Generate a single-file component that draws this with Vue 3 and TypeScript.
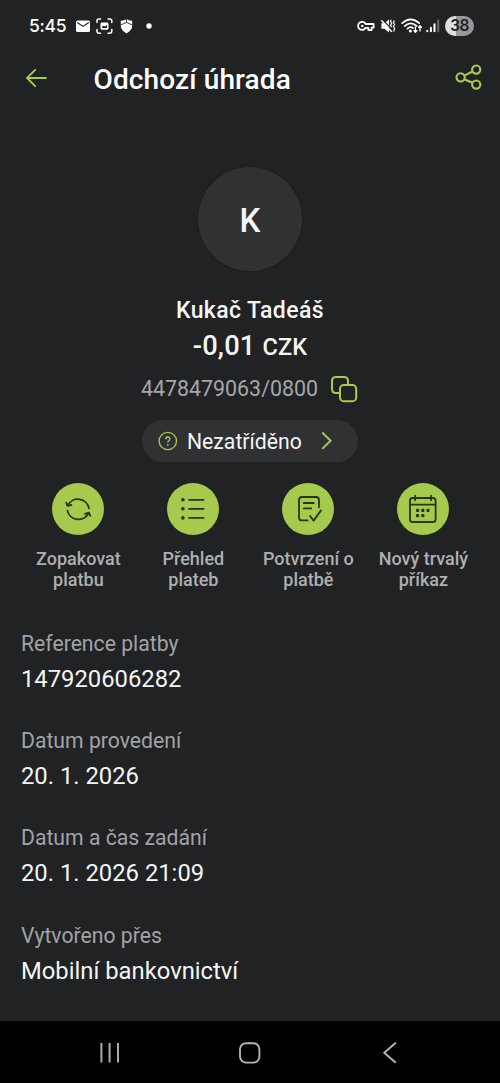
<script setup lang="ts">
type IconName = 'repeat' | 'list' | 'confirm' | 'calendar'

interface Action {
  icon: IconName
  lines: [string, string]
}

interface Field {
  label: string
  value: string
}

const actions: Action[] = [
  { icon: 'repeat', lines: ['Zopakovat', 'platbu'] },
  { icon: 'list', lines: ['Přehled', 'plateb'] },
  { icon: 'confirm', lines: ['Potvrzení o', 'platbě'] },
  { icon: 'calendar', lines: ['Nový trvalý', 'příkaz'] },
]

const fields: Field[] = [
  { label: 'Reference platby', value: '147920606282' },
  { label: 'Datum provedení', value: '20. 1. 2026' },
  { label: 'Datum a čas zadání', value: '20. 1. 2026 21:09' },
  { label: 'Vytvořeno přes', value: 'Mobilní bankovnictví' },
]
</script>

<template>
  <div class="screen">
    <div class="status">
      <span class="time">5:45</span>
      <svg class="status-left" width="80" height="20" viewBox="0 0 80 20">
        <rect x="1" y="4.5" width="14" height="11.5" rx="1.5" fill="#fff" />
        <path d="M2.2 6.6 L8 10.4 L13.8 6.6" fill="none" stroke="#202224" stroke-width="1.2" />
        <g fill="none" stroke="#fff" stroke-width="1.5" stroke-linecap="round">
          <path d="M22 6.5 V5 Q22 3 24 3 H25.5 M33 3 H34.5 Q36.8 3 36.8 5 V6.5 M36.8 13.5 V15 Q36.8 17.2 34.5 17.2 H33 M25.5 17.2 H24 Q22 17.2 22 15 V13.5" />
        </g>
        <rect x="25.5" y="6.5" width="8" height="7.2" rx="1.4" fill="#fff" />
        <path d="M27 12 V10.8 L28.7 9.8 L30 10.6 L32 9 V12 Z" fill="#202224" />
        <path d="M51.5 3 Q54 5 57.2 4.8 V10 Q57 14.5 51.5 17.4 Q46 14.5 45.8 10 V4.8 Q49 5 51.5 3 Z" fill="#fff" />
        <path d="M46 8.8 L51.5 6.4 L57 8.8 M51.5 3 V6.4" fill="none" stroke="#202224" stroke-width="0.9" />
        <circle cx="74" cy="10" r="2.7" fill="#fff" />
      </svg>
      <span class="grow"></span>
      <svg class="status-right" width="84" height="20" viewBox="0 0 84 20">
        <g fill="none" stroke="#fff" stroke-width="1.8" stroke-linejoin="round">
          <path d="M9.6 8 H17.6 V11.7 H15.6 V14.2 H12.4 V11.8 H9.6 A4 4 0 1 1 9.6 8 Z" />
        </g>
        <circle cx="6.3" cy="10" r="1.3" fill="#fff" />
        <path d="M25.4 7.2 H28.4 L33 3.6 V16.4 L28.4 12.8 H25.4 Z" fill="#fff" />
        <path d="M26.4 3.4 L37 14.6" stroke="#202224" stroke-width="1.2" />
        <path d="M25.3 4.2 L35.8 15.8" stroke="#fff" stroke-width="1.5" />
        <path d="M35.4 3.8 L34.4 5.5 L35.7 7.4 L34.4 9.4 L35.7 11.2 M38.4 4.5 L37.4 6.5 L38.6 8.5 L37.4 10.5 L38.6 12.5 L37.6 15.6" fill="none" stroke="#fff" stroke-width="1.2" />
        <g fill="none" stroke="#fff" stroke-width="1.7" stroke-linecap="round">
          <path d="M46.2 7.2 Q54.7 -.6 63.2 7.2" />
          <path d="M48.8 10 Q54.7 4.8 60.6 10" />
          <path d="M51.5 12.6 Q54.7 10 57 12.2" />
        </g>
        <circle cx="54.4" cy="15" r="1.5" fill="#fff" />
        <path d="M59.4 10.5 V16 M57.6 14.2 L59.4 16.2 L61.2 14.2 M64 15.5 V10 M62.2 11.8 L64 9.8 L65.8 11.8" fill="none" stroke="#fff" stroke-width="1.3" />
        <g stroke-width="2" stroke-linecap="round" stroke="#fff">
          <path d="M71.3 14.8 V15.2 M74.9 11.8 V15.2 M78.5 8.2 V15.2" />
          <path d="M82.2 4.5 V15.2" stroke="#696b6d" />
        </g>
      </svg>
      <span class="battery">38</span>
    </div>

    <header class="header">
      <svg class="back" width="24" height="20" viewBox="0 0 24 20">
        <path d="M21 10 H2 M10.2 1.8 L2 10 L10.2 18.2" fill="none" stroke="#a9cc4f" stroke-width="1.8" stroke-linecap="round" stroke-linejoin="round" />
      </svg>
      <h1 class="title">Odchozí úhrada</h1>
      <span class="grow"></span>
      <svg class="share" width="28" height="28" viewBox="0 0 28 28">
        <g fill="none" stroke="#a9cc4f" stroke-width="2.1">
          <circle cx="5.6" cy="13.4" r="4.1" />
          <circle cx="21.2" cy="5.6" r="4.1" />
          <circle cx="21.2" cy="20.6" r="4.1" />
          <path d="M9.3 11.6 L17.5 7.5 M9.3 15.2 L17.5 18.8" />
        </g>
      </svg>
    </header>

    <section class="summary">
      <div class="avatar">K</div>
      <div class="name">Kukač Tadeáš</div>
      <div class="amount">-0,01 <span class="currency">CZK</span></div>
      <div class="account">
        <span class="number">4478479063/0800</span>
        <svg class="copy" width="28" height="28" viewBox="0 0 28 28">
          <g fill="none" stroke="#a9cc4f" stroke-width="2">
            <path d="M9 18 H6 Q2 18 2 14 V6 Q2 2 6 2 H14 Q18 2 18 6 V9" />
            <rect x="10" y="10" width="16.2" height="16.2" rx="3.8" />
          </g>
        </svg>
      </div>
      <div class="chip">
        <svg width="20" height="20" viewBox="0 0 20 20">
          <circle cx="9.8" cy="10" r="8.7" fill="none" stroke="#a9cc4f" stroke-width="1.3" />
          <path d="M7.8 8.2 Q7.8 6 9.8 6 Q11.8 6 11.8 7.9 Q11.8 9 10.8 9.7 Q9.8 10.4 9.8 11.6" fill="none" stroke="#a9cc4f" stroke-width="1.3" />
          <circle cx="9.8" cy="13.8" r=".9" fill="#a9cc4f" />
        </svg>
        <span class="category">Nezatříděno</span>
        <svg class="chevron" width="12" height="20" viewBox="0 0 12 20">
          <path d="M1.2 1.5 L9.6 9.7 L1.2 17.9" fill="none" stroke="#a9cc4f" stroke-width="1.9" />
        </svg>
      </div>
    </section>

    <nav class="actions">
      <div v-for="action in actions" :key="action.icon" class="action">
        <span class="disc">
          <svg width="52" height="52" viewBox="0 0 52 52" fill="none" stroke="#2b3512" stroke-width="1.8" stroke-linecap="round" stroke-linejoin="round">
            <template v-if="action.icon === 'repeat'">
              <path d="M15.8 22.4 A11.3 11.3 0 0 1 37 25.4" />
              <path d="M14.2 19.6 L15.5 22.8 L19.4 22" />
              <path d="M15.4 27.6 A11.3 11.3 0 0 0 36.6 30" />
              <path d="M33 30.8 L37 29.6 L38.2 32.8" />
            </template>
            <template v-else-if="action.icon === 'list'">
              <path d="M21.3 16.8 H37.2 M21.3 25.8 H37.2 M21.3 34.9 H37.2" stroke-linecap="butt" />
              <g fill="#2b3512" stroke="none">
                <circle cx="15.9" cy="16.8" r="1.8" />
                <circle cx="15.9" cy="25.8" r="1.8" />
                <circle cx="15.9" cy="34.9" r="1.8" />
              </g>
            </template>
            <template v-else-if="action.icon === 'confirm'">
              <path d="M25.6 37.4 H20 Q17 37.4 17 34.4 V17 Q17 14 20 14 H34 Q37 14 37 17 V24.3" />
              <path d="M21.8 20 H31.8 M21.8 25.4 H29.2" />
              <path d="M28.1 33 L31.6 37.6 L39 27.4" />
            </template>
            <template v-else>
              <rect x="13" y="15" width="25.6" height="24" rx="2.6" />
              <path d="M13 21.6 H38.6 M18.2 12.6 V17.3 M34 12.6 V17.3" />
              <g fill="#2b3512" stroke="none">
                <rect x="19" y="25.8" width="3.2" height="3.2" rx="1" />
                <rect x="24.2" y="25.8" width="3.2" height="3.2" rx="1" />
                <rect x="29.4" y="25.8" width="3.2" height="3.2" rx="1" />
                <rect x="19" y="31" width="3.2" height="3.2" rx="1" />
                <rect x="24.2" y="31" width="3.2" height="3.2" rx="1" />
              </g>
            </template>
          </svg>
        </span>
        <span class="caption">{{ action.lines[0] }}<br />{{ action.lines[1] }}</span>
      </div>
    </nav>

    <dl class="fields">
      <div v-for="field in fields" :key="field.label" class="field">
        <dt>{{ field.label }}</dt>
        <dd>{{ field.value }}</dd>
      </div>
    </dl>

    <footer class="navbar">
      <svg width="24" height="24" viewBox="0 0 24 24">
        <path d="M3.4 2 V21.5 M11.6 2 V21.5 M20 2 V21.5" stroke="#aaa" stroke-width="2" />
      </svg>
      <svg width="24" height="24" viewBox="0 0 24 24">
        <rect x="2" y="2.2" width="19.4" height="19.4" rx="6" fill="none" stroke="#b4b4b4" stroke-width="1.9" />
      </svg>
      <svg width="24" height="24" viewBox="0 0 24 24">
        <path d="M17.8 1.8 L6.2 11.8 L17.8 21.8" fill="none" stroke="#b4b4b4" stroke-width="1.9" />
      </svg>
    </footer>
  </div>
</template>

<style>
body {
  margin: 0;
  background: #202224;
}
</style>

<style scoped>
.screen {
  width: 500px;
  height: 1083px;
  display: flex;
  flex-direction: column;
  overflow: hidden;
  background: #202224;
  color: #f4f5f5;
  font-family: Roboto, "Liberation Sans", sans-serif;
}
svg {
  display: block;
  flex: none;
}
.grow {
  flex: 1;
}
.status {
  height: 52px;
  flex: none;
  box-sizing: border-box;
  display: flex;
  align-items: center;
  padding: 0 26px 0 29px;
}
.time {
  width: 46px;
  font: 500 17.5px/20px Inter, Roboto, sans-serif;
  letter-spacing: -0.3px;
  color: #fff;
}
.status-right {
  margin-right: 5px;
}
.battery {
  width: 29px;
  height: 20px;
  border-radius: 10px;
  background: linear-gradient(90deg, #dededf 38%, #97989a 38%);
  color: #202224;
  text-align: center;
  font: 600 15.5px/20px Inter, Roboto, sans-serif;
  letter-spacing: -0.6px;
}
.header {
  height: 52px;
  flex: none;
  display: flex;
  align-items: center;
  padding: 0 17px 0 25px;
}
.title {
  margin: 3px 0 0 44.5px;
  font-size: 28px;
  font-weight: 500;
  line-height: 40px;
  letter-spacing: 0.12px;
  color: #fff;
  white-space: nowrap;
}
.summary {
  display: flex;
  flex-direction: column;
  align-items: center;
  padding-top: 62.5px;
}
.avatar {
  width: 104px;
  height: 104px;
  border-radius: 50%;
  background: #303133;
  box-shadow: 0 0 2px #18191b;
  text-align: center;
  font-size: 33px;
  font-weight: 500;
  line-height: 107px;
}
.name {
  margin-top: 24.5px;
  font-size: 23px;
  font-weight: 500;
  line-height: 32px;
  letter-spacing: 0.42px;
}
.amount {
  margin-top: 1px;
  font-size: 27.3px;
  font-weight: 500;
  line-height: 36px;
  letter-spacing: 0.15px;
}
.currency {
  font-size: 23.5px;
}
.account {
  display: flex;
  align-items: center;
  margin-top: 8px;
  height: 30px;
}
.number {
  font-size: 21.4px;
  color: #a6a7a9;
}
.copy {
  margin: 2px 1px 0 12px;
}
.chip {
  width: 216px;
  height: 42px;
  margin-top: 17px;
  box-sizing: border-box;
  display: flex;
  align-items: center;
  padding-left: 16px;
  border-radius: 21px;
  background: #303133;
}
.category {
  width: 116px;
  margin-left: 9px;
  font-size: 21.2px;
}
.chevron {
  margin-left: 18px;
}
.actions {
  display: grid;
  grid-template-columns: repeat(4, 115px);
  padding: 20.5px 0 0 20.9px;
}
.action {
  display: flex;
  flex-direction: column;
  align-items: center;
}
.disc {
  width: 52px;
  height: 52px;
  border-radius: 50%;
  background: #a5ca4d;
}
.caption {
  margin-top: 13px;
  font-size: 18px;
  font-weight: 500;
  line-height: 21.5px;
  text-align: center;
  white-space: nowrap;
  color: #aeafb1;
}
.fields {
  margin: 0;
  padding: 38px 21px 0;
}
.field {
  height: 97.4px;
}
dt {
  font-size: 21.2px;
  line-height: 30px;
  color: #a2a3a5;
}
dd {
  margin: 5px 0 0;
  font-size: 23.8px;
  line-height: 30px;
}
.navbar {
  height: 62.5px;
  flex: none;
  margin-top: auto;
  display: flex;
  align-items: center;
  justify-content: space-between;
  box-sizing: border-box;
  padding: 2px 98px 0;
  background: #000;
}
</style>
